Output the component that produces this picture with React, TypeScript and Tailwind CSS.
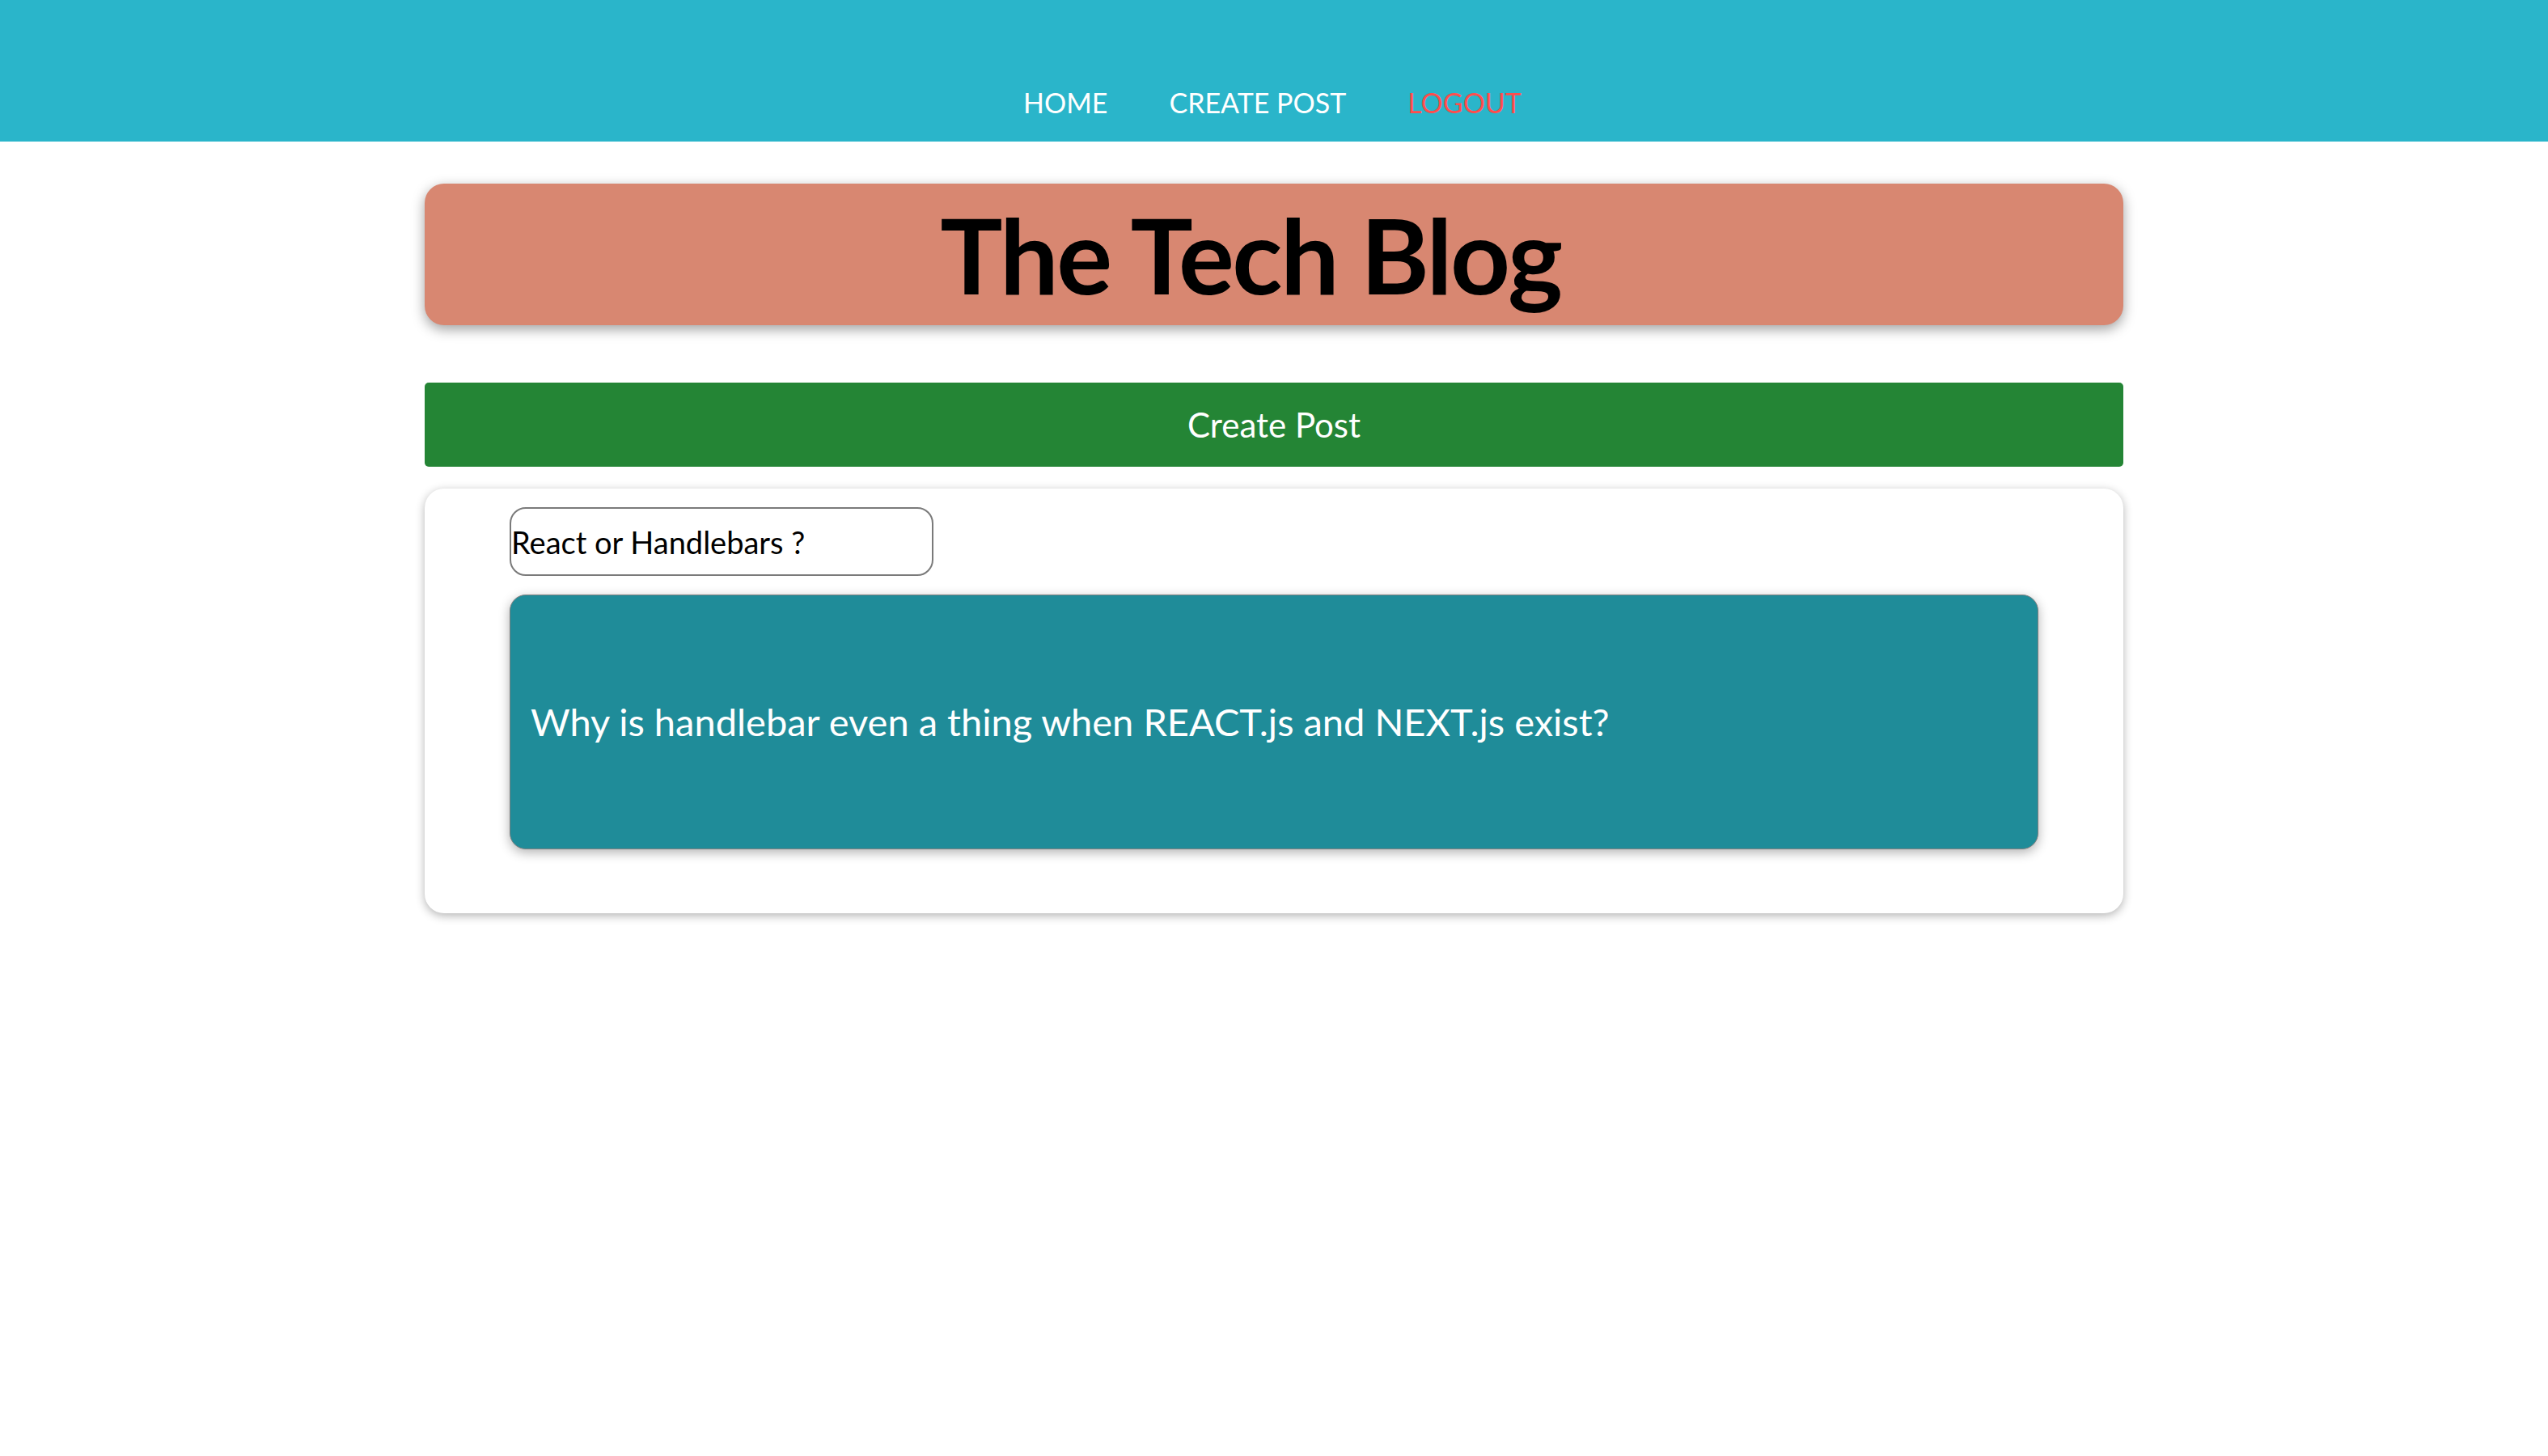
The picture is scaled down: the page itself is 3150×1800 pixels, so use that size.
import React from 'react';

const navLinks = [
  { label: 'HOME', color: 'text-white' },
  { label: 'CREATE POST', color: 'text-white' },
  { label: 'LOGOUT', color: 'text-[#ff4d4d]' },
];

const App = () => {
  return (
    <div className="min-h-screen bg-white font-['Lato','Liberation_Sans',sans-serif]">
      {/* Top nav */}
      <header className="h-[175px] bg-[#2ab5ca] flex items-end justify-center pb-[28px]">
        <nav className="flex gap-[76px] pr-[4px]">
          {navLinks.map((link) => (
            <a key={link.label} href="#" className={`text-[34px] leading-[40px] ${link.color}`}>
              {link.label}
            </a>
          ))}
        </nav>
      </header>

      <main className="w-[2100px] mx-auto pt-[52px]">
        {/* Blog title */}
        <div className="h-[175px] bg-[#d88771] rounded-[24px] shadow-[0_5px_16px_rgba(0,0,0,0.38)] flex items-center justify-center pr-[58px]">
          <h1 className="text-[129px] leading-none font-bold tracking-[-2.5px] text-black">The Tech Blog</h1>
        </div>

        {/* Create post button */}
        <button className="mt-[71px] w-full h-[104px] bg-[#248535] rounded-[5px] text-white text-[42px] flex items-center justify-center">
          Create Post
        </button>

        {/* Post card */}
        <section className="mt-[27px] bg-white rounded-[24px] shadow-[0_3px_12px_rgba(0,0,0,0.3)] pt-[23px] pb-[79px] px-[105px]">
          <div className="w-[524px] h-[85px] border-2 border-[#7a7a7a] rounded-[20px] flex items-center">
            <h2 className="text-[38px] text-black leading-none">React or Handlebars ?</h2>
          </div>
          <div className="mt-[23px] h-[315px] bg-[#1f8c99] border border-[#808080] rounded-[20px] shadow-[0_4px_14px_rgba(0,0,0,0.3)] flex items-center px-[25px]">
            <p className="text-[47px] text-white leading-none">
              Why is handlebar even a thing when REACT.js and NEXT.js exist?
            </p>
          </div>
        </section>
      </main>
    </div>
  );
};

export default App;
